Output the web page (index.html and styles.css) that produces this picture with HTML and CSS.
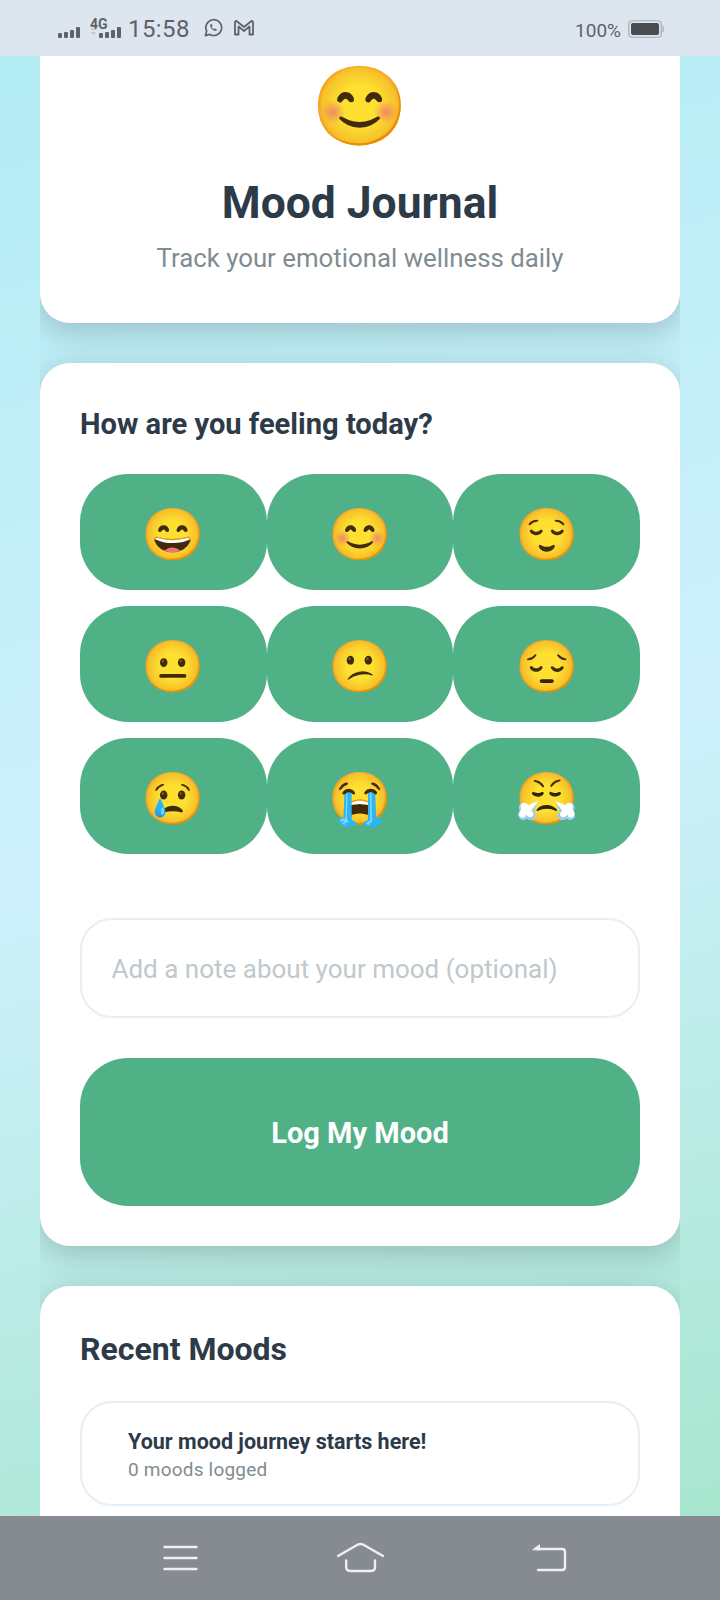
FILE: index.html
```html
<!DOCTYPE html>
<html lang="en">
<head>
<meta charset="utf-8">
<title>Mood Journal</title>
<link rel="stylesheet" href="styles.css">
</head>
<body>
<div class="screen">
  <header class="status">
    <div class="status-left">
      <svg class="sig1" width="24" height="12" viewBox="0 0 24 12"><g fill="#5f6368"><rect x="0" y="7" width="4" height="5" rx="1"/><rect x="6" y="6" width="4" height="6" rx="1"/><rect x="12" y="4" width="4" height="8" rx="1"/><rect x="18" y="1" width="4" height="11" rx="1"/></g></svg>
      <div class="net">
        <span class="net-label">4G</span>
        <svg width="32" height="12" viewBox="0 0 32 12"><path d="M3.500 1 L6.500 4 H0.500 Z M0.500 6 H6.500 L3.500 9 Z" fill="#c3c8cd"/><g fill="#5f6368"><rect x="9" y="7" width="4" height="5" rx="1"/><rect x="15" y="6" width="4" height="6" rx="1"/><rect x="21" y="4" width="4" height="8" rx="1"/><rect x="27" y="1" width="4" height="11" rx="1"/></g></svg>
      </div>
      <span class="time">15:58</span>
      <svg class="wa" width="19" height="19" viewBox="0 0 20 20" fill="none" stroke="#5f6368"><path d="M1.500 18.500 L2.800 13.700 A8.300 8.300 0 1 1 6.200 17.300 Z" stroke-width="1.800" stroke-linejoin="round"/><path d="M6.800 6.200 C6 8 7 10.500 8.800 12 C10.300 13.300 12.300 14 13.700 13 L13 11.500 L11.400 11 L10.600 11.800 C9.500 11.300 8.600 10.300 8.200 9.200 L9 8.400 L8.300 6.500 Z" fill="#5f6368" stroke="none"/></svg>
      <svg class="gm" width="20" height="16" viewBox="0 0 20 16" fill="none" stroke="#5f6368" stroke-width="1.800" stroke-linejoin="round"><path d="M1 14.500 V2.500 Q1 1 2.500 1 L10 7 L17.500 1 Q19 1 19 2.500 V14.500 H15.500 V6.500 L10 11 L4.500 6.500 V14.500 Z"/></svg>
    </div>
    <div class="status-right">
      <span class="pct">100%</span>
      <svg width="36" height="18" viewBox="0 0 36 18"><rect x="0.750" y="0.750" width="32.500" height="16.500" rx="3.500" fill="none" stroke="#a9adb2" stroke-width="1.200"/><rect x="3" y="3" width="28" height="12" rx="2" fill="#4a4d50"/><rect x="34.500" y="6" width="1.200" height="6" fill="#a9adb2"/></svg>
    </div>
  </header>

  <main class="viewport">
    <div class="column">
      <section class="card hero">
        <div class="hero-emoji">😊</div>
        <h1 class="title">Mood Journal</h1>
        <p class="subtitle">Track your emotional wellness daily</p>
      </section>

      <section class="card entry">
        <h2 class="heading-sm">How are you feeling today?</h2>
        <div class="mood-grid">
          <button class="mood">😄</button>
          <button class="mood">😊</button>
          <button class="mood">😌</button>
          <button class="mood">😐</button>
          <button class="mood">😕</button>
          <button class="mood">😔</button>
          <button class="mood">😢</button>
          <button class="mood">😭</button>
          <button class="mood">😤</button>
        </div>
        <input class="note" type="text" placeholder="Add a note about your mood (optional)">
        <button class="log">Log My Mood</button>
      </section>

      <section class="card recent">
        <h2 class="heading">Recent Moods</h2>
        <div class="entry-row">
          <div class="entry-title">Your mood journey starts here!</div>
          <div class="entry-sub">0 moods logged</div>
        </div>
      </section>
    </div>
  </main>

  <nav class="navbar">
    <svg class="nav-menu" width="36" height="32" viewBox="0 0 36 32" fill="none" stroke="#eef0f1" stroke-width="2.400" stroke-linecap="round"><path d="M2.500 6 H34.500 M2.500 17 H34.500 M2.500 28 H34.500"/></svg>
    <svg class="nav-home" width="50" height="32" viewBox="0 0 50 32" fill="none" stroke="#eef0f1" stroke-width="2.400" stroke-linecap="round" stroke-linejoin="round"><path d="M2 15 L21.500 3.800 Q24.500 2.200 27.500 3.800 L47 15"/><path d="M10.200 19.500 V26 Q10.200 30 14.200 30 H35 Q39 30 39 26 V19.500"/></svg>
    <svg class="nav-back" width="36" height="32" viewBox="0 0 36 32" fill="none" stroke="#eef0f1" stroke-width="2.400" stroke-linecap="round" stroke-linejoin="round"><path d="M6 8 H31 Q34 8 34 11 V26 Q34 29 31 29 H7"/><path d="M2 8.500 L8.500 3.800 V8.500 Z" fill="#eef0f1" stroke-width="1"/></svg>
  </nav>
</div>
</body>
</html>
```

FILE: styles.css
```css
* { box-sizing: border-box; }
html, body { margin: 0; padding: 0; }
body {
  width: 720px;
  height: 1600px;
  overflow: hidden;
  font-family: Roboto, "Noto Color Emoji", "Liberation Sans", sans-serif;
  color: #2d3a48;
}
.screen {
  width: 720px;
  height: 1600px;
  display: flex;
  flex-direction: column;
}
.status {
  flex: 0 0 56px;
  background: #dde6ef;
  display: flex;
  align-items: center;
  justify-content: space-between;
  padding: 0 56px 0 58px;
  color: #5f6368;
}
.status-left { display: flex; align-items: flex-end; height: 32px; }
.status-right { display: flex; align-items: center; gap: 7px; margin-top: 2px; }
.sig1 { margin-bottom: 6px; margin-right: 8px; }
.net { position: relative; width: 32px; height: 28px; margin-right: 6px; }
.net svg { position: absolute; left: 0; bottom: 6px; }
.net-label { position: absolute; left: 0; top: 2px; font-size: 14px; font-weight: 700; line-height: 12px; }
.time { font-size: 24px; line-height: 30px; letter-spacing: 0.400px; margin-right: 14px; }
.wa { margin-bottom: 7px; margin-right: 11px; }
.gm { margin-bottom: 8px; }
.pct { font-size: 19px; line-height: 22px; margin-top: 4px; }
.viewport {
  flex: 1 1 auto;
  min-height: 0;
  overflow: hidden;
  background: linear-gradient(165deg, #b2ebf2 0%, #cef1fd 50%, #a8e6cf 100%);
  padding: 0 40px;
}
.column {
  height: 100%;
  overflow: hidden;
  display: flex;
  flex-direction: column;
  gap: 40px;
}
.card {
  flex: none;
  background: #fff;
  border-radius: 30px;
  box-shadow: 0 8px 32px rgba(0, 0, 0, 0.2);
}
.hero {
  height: 267px;
  border-radius: 0 0 30px 30px;
  text-align: center;
  display: flex;
  flex-direction: column;
  align-items: center;
}
.hero-emoji { font-size: 78px; line-height: 96px; margin-top: 3px; }
.title { margin: 22px 0 0; font-size: 44.400px; line-height: 52px; font-weight: 700; }
.subtitle { margin: 13px 0 0; font-size: 25.800px; line-height: 32px; color: #7f8c92; font-weight: 400; }
.entry { height: 883px; padding: 40px; }
.heading-sm { margin: 2px 0 31px; font-size: 29.100px; line-height: 38px; font-weight: 700; }
.mood-grid {
  display: grid;
  grid-template-columns: repeat(3, 1fr);
  grid-auto-rows: 116px;
  row-gap: 16px;
}
.mood {
  border: 0;
  padding: 5px 0 0;
  border-radius: 48px;
  background: #50b187;
  font-size: 51px;
  line-height: 1;
  font-family: inherit;
}
.note {
  display: block;
  width: 100%;
  height: 100px;
  margin-top: 64px;
  border: 2.500px solid #e6eef6;
  border-radius: 32px;
  padding: 2px 29.500px 0;
  font: 400 26px Roboto, sans-serif;
  outline: 0;
  background: #fff;
}
.note::placeholder { color: #c0c8cc; opacity: 1; }
.log {
  display: block;
  width: 100%;
  height: 148px;
  margin-top: 40px;
  border: 0;
  padding: 1px 0 0;
  border-radius: 48px;
  background: #50b187;
  color: #fff;
  font: 700 29px Roboto, sans-serif;
}
.recent { height: 320px; padding: 40px; }
.heading { margin: 1px 0 30px; font-size: 32px; line-height: 44px; font-weight: 700; }
.entry-row {
  height: 105px;
  border: 2.500px solid #e6eef6;
  border-radius: 32px;
  padding: 25px 46px 0;
}
.entry-title { font-size: 21.500px; line-height: 28px; font-weight: 700; margin-bottom: 1px; }
.entry-sub { font-size: 19px; line-height: 26px; color: #7f8c92; letter-spacing: 0.200px; }
.navbar {
  flex: 0 0 84px;
  background: #868a91;
  display: flex;
  align-items: flex-start;
  padding: 25px 0 0 162px;
}
.nav-menu { margin-right: 138px; }
.nav-home { margin-right: 145px; }
```
